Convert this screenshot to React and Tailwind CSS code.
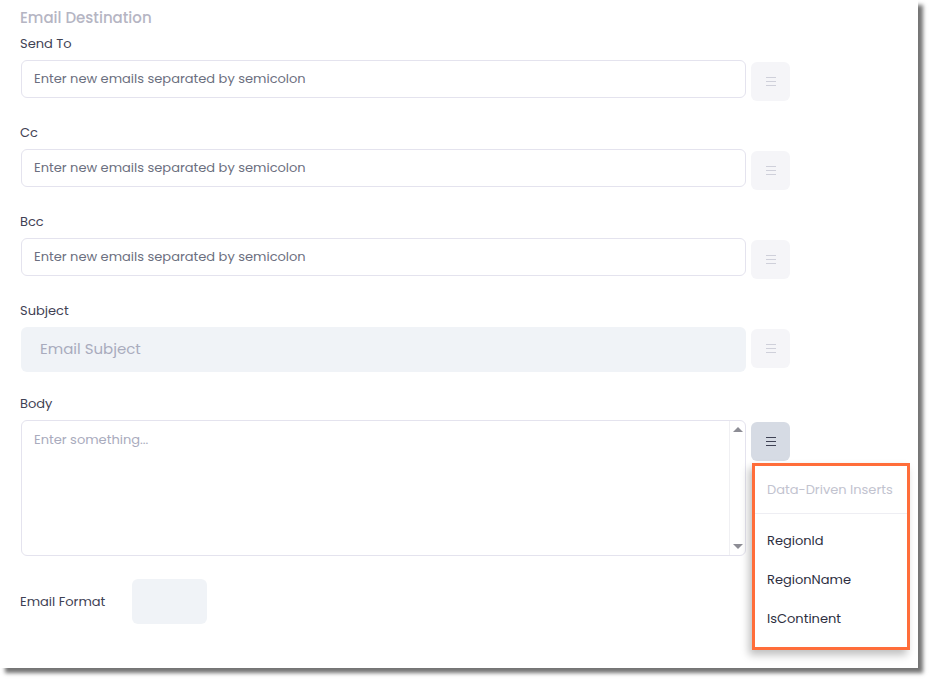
import React from "react";

const font = { fontFamily: '"Poppins", Inter, "Noto Sans", sans-serif' };

function MenuIcon({ active }) {
  const c = active ? "bg-[#3f4254]" : "bg-[#cfd0da]";
  return (
    <div className="flex flex-col gap-[3px]">
      <span className={`block w-[10px] h-[1px] ${c}`} />
      <span className={`block w-[10px] h-[1px] ${c}`} />
      <span className={`block w-[10px] h-[1px] ${c}`} />
    </div>
  );
}

function SideButton({ active }) {
  return (
    <div
      className={`mt-[2px] w-[39px] h-[39px] shrink-0 rounded-[6px] flex items-center justify-center ${
        active ? "bg-[#d6dbe4]" : "bg-[#f5f5f8]"
      }`}
    >
      <MenuIcon active={active} />
    </div>
  );
}

function Label({ children }) {
  return <div className="-ml-[1px] h-[20px] pt-[1px] leading-[20px] text-[13px] text-[#3f4254]">{children}</div>;
}

function EmailField({ label, top }) {
  return (
    <div className={top}>
      <Label>{label}</Label>
      <div className="mt-[7px] flex gap-[5px] items-start h-[38px]">
        <div className="w-[725px] h-[38px] rounded-[6px] border border-[#e4e3ee] flex items-center pl-[12px] text-[13px] text-[#6c6f80]">
          Enter new emails separated by semicolon
        </div>
        <SideButton />
      </div>
    </div>
  );
}

export default function App() {
  return (
    <div className="w-[933px] h-[685px] bg-white relative overflow-hidden" style={font}>
      <div className="w-[918px] h-[668px] bg-white shadow-[5px_5px_4px_rgba(0,0,0,0.55)] pl-[21px] pt-[7px] relative">
        <div className="h-[22px] leading-[22px] text-[15px] font-medium text-[#b5b5c3] -ml-[1px]">
          Email Destination
        </div>
        <EmailField label="Send To" top="mt-[4px]" />
        <EmailField label="Cc" top="mt-[24px]" />
        <EmailField label="Bcc" top="mt-[24px]" />

        <div className="mt-[24px]">
          <Label>Subject</Label>
          <div className="mt-[7px] flex gap-[5px] items-start">
            <div className="w-[725px] h-[45px] rounded-[6px] bg-[#f0f3f7] flex items-center pl-[19px] text-[15px] text-[#a9abbd]">
              Email Subject
            </div>
            <SideButton />
          </div>
        </div>

        <div className="mt-[21px]">
          <Label>Body</Label>
          <div className="mt-[7px] flex gap-[5px] items-start">
            <div className="w-[725px] h-[136px] rounded-[6px] border border-[#e4e3ee] flex">
              <div className="flex-1 pl-[12px] pt-[9px] text-[13px] text-[#a9abbd]">Enter something...</div>
              <div className="w-[16px] border-l border-[#f0f0f3] flex flex-col items-center justify-between py-[6px]">
                <div className="w-0 h-0 border-l-[5px] border-r-[5px] border-b-[5px] border-l-transparent border-r-transparent border-b-[#8d8d95]" />
                <div className="w-0 h-0 border-l-[5px] border-r-[5px] border-t-[5px] border-l-transparent border-r-transparent border-t-[#8d8d95]" />
              </div>
            </div>
            <SideButton active />
          </div>
        </div>

        <div className="mt-[23px] flex items-center">
          <div className="-ml-[1px] w-[112px] text-[13px] text-[#3f4254]">Email Format</div>
          <div className="w-[75px] h-[45px] rounded-[6px] bg-[#f0f3f7]" />
        </div>
      </div>

      {/* dropdown */}
      <div className="absolute left-[752px] top-[463px] w-[158px] h-[187px] border-[3px] border-[#ff6d3a] bg-white shadow-[-3px_5px_8px_rgba(0,0,0,0.25)] flex flex-col">
        <div className="h-[48px] border-b border-[#eeeef3] pl-[12px] flex items-center text-[13px] text-[#c2c3cf]">
          Data-Driven Inserts
        </div>
        <div className="pl-[12px] text-[13px] text-[#2d2f3f]">
          <div className="mt-[15px] h-[24px] leading-[24px]">RegionId</div>
          <div className="mt-[15px] h-[24px] leading-[24px]">RegionName</div>
          <div className="mt-[15px] h-[24px] leading-[24px]">IsContinent</div>
        </div>
      </div>
    </div>
  );
}
